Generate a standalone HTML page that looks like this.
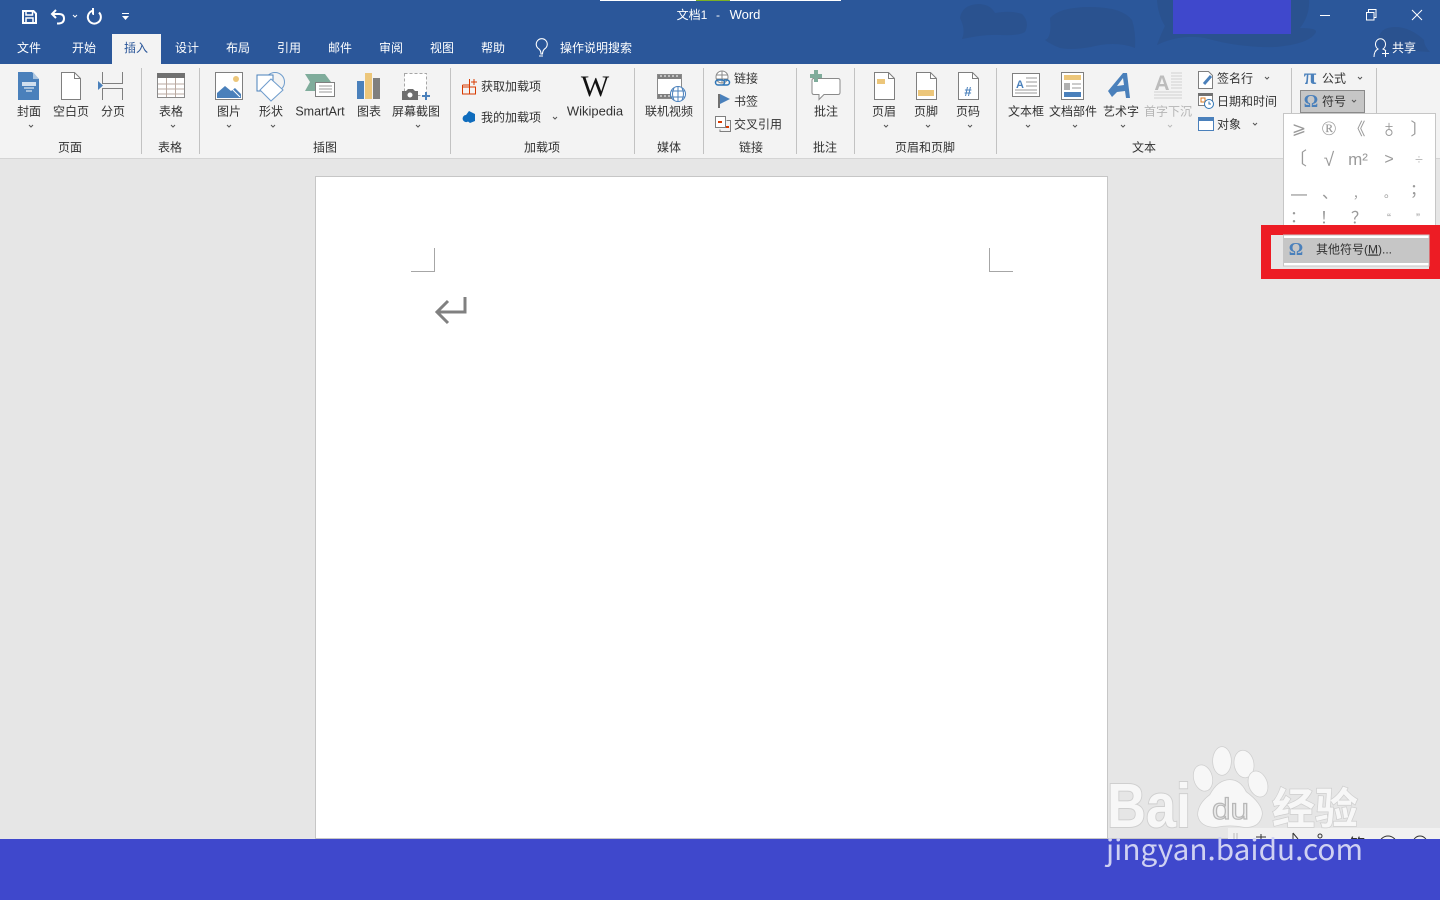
<!DOCTYPE html>
<html lang="zh-CN"><head><meta charset="utf-8"><title>文档1 - Word</title>
<style>
html,body{margin:0;padding:0;width:1440px;height:900px;overflow:hidden;background:#e6e6e6}
svg{display:block;position:absolute;left:0;top:0}
text{font-family:"Liberation Sans","Noto Sans CJK SC",sans-serif;font-size:12px;fill:#333;text-anchor:middle}
.w text,text.w{fill:#fff}
.l{text-anchor:start}
.g{fill:#b5b5b5}
.sym text{fill:#9a9a9a;font-size:16px}
.ch{fill:none;stroke:#555;stroke-width:1}
</style></head><body>
<svg width="1440" height="900" viewBox="0 0 1440 900">
<!-- backgrounds -->
<rect x="0" y="0" width="1440" height="64" fill="#2b579a"/>
<g fill="#2a528f">
<path d="M960 18Q962 5 978 4 990 4 995 13 1010 10 1022 14 1030 22 1025 32 1018 36 1000 35 985 34 962 39 966 30 960 18Z"/>
<path d="M1050 18Q1060 7 1090 7 1122 7 1132 20 1136 32 1135 48 1120 42 1100 45 1075 51 1060 48 1050 44 1045 40 1052 38 1050 18Z"/>
<path d="M1157 0H1309Q1310 15 1300 28 1317 28 1316 32 1310 44 1275 47 1240 48 1205 38 1180 34 1157 45 1161 34 1165 26 1158 15 1157 0Z"/>
<path d="M1378 40Q1380 27 1395 27 1410 27 1424 40 1424 46 1430 52 1405 50 1385 52Q1378 48 1378 40Z"/>
</g>
<rect x="600" y="0" width="241" height="1" fill="#fff"/><rect x="696" y="0" width="34" height="1" fill="#7cb024"/>
<rect x="1173" y="0" width="118" height="34" fill="#3f48cc"/>
<rect x="112" y="34" width="49" height="30" fill="#f3f3f3"/>
<rect x="0" y="64" width="1440" height="94" fill="#f3f3f3"/>
<rect x="0" y="158" width="1440" height="1" fill="#d4d4d4"/>
<rect x="315.500" y="176.500" width="792" height="663" fill="#fff" stroke="#c6c6c6"/>
<rect x="1228" y="828" width="212" height="11" fill="#f1f1f1"/>

<!-- QAT -->
<g fill="none" stroke="#fff" stroke-width="2">
<path d="M23 11h10.500l2.500 2.500V23H23z"/><path d="M26 11v4h6.500v-4M26 23v-5h7v5" stroke-width="1.500"/>
<path d="M56 10l-4 4 4 4M52 14h7q5 0 5 4.500t-5 5h-2"/>
<path d="M93 10.700a6.500 6.500 0 1 0 6 1.800M93 8v6h-0.500" />
</g>
<path d="M73 15l2 2 2-2" fill="none" stroke="#fff"/>
<path d="M122 16h7l-3.500 4z" fill="#fff"/>
<rect x="122" y="13" width="7" height="1" fill="#fff"/>

<!-- title -->
<g class="w">
<text x="692" y="19">文档1</text><text x="718" y="19">-</text><text x="745" y="19" style="font-size:13px">Word</text>
</g>
<!-- window controls -->
<g fill="none" stroke="#fff" stroke-width="1">
<path d="M1320 15.500h10"/><path d="M1366.500 12.500h7.500v7.500h-7.500zM1368.500 12v-2.500h7.500v8h-2"/><path d="M1412 10l10 10M1422 10l-10 10"/>
<path d="M1374 57q0-6 4-8a5 5.500 0 1 1 5 0q2 .8 3 2"/><path d="M1382 53.500h7M1385.500 50v7"/>
<path d="M541 54q0-3-2-5a5.500 5.500 0 1 1 5.500 0q-2 2-2 5zM539 56h4" stroke-width="1.100"/>
</g>
<!-- tabs -->
<g class="w">
<text x="29" y="52">文件</text><text x="84" y="52">开始</text>
<text x="187" y="52">设计</text><text x="238" y="52">布局</text><text x="289" y="52">引用</text><text x="340" y="52">邮件</text><text x="391" y="52">审阅</text><text x="442" y="52">视图</text><text x="493" y="52">帮助</text><text x="596" y="52">操作说明搜索</text><text x="1404" y="52">共享</text>
</g>
<text x="136" y="52" style="fill:#2b579a">插入</text>

<!-- separators -->
<g fill="#c2c2c2">
<rect x="141" y="68" width="1" height="86"/><rect x="199" y="68" width="1" height="86"/><rect x="450" y="68" width="1" height="86"/><rect x="634" y="68" width="1" height="86"/><rect x="703" y="68" width="1" height="86"/><rect x="796" y="68" width="1" height="86"/><rect x="854" y="68" width="1" height="86"/><rect x="996" y="68" width="1" height="86"/><rect x="1291" y="68" width="1" height="45"/><rect x="1376" y="68" width="1" height="45"/>
</g>

<!-- page group icons -->
<path d="M18 72h14l7 7v21h-21z" fill="#4a80bb"/><path d="M33 72l6 7h-6z" fill="#a9c4e0"/><rect x="22" y="82" width="14" height="4" fill="#fff" opacity=".75"/><path d="M24 88h10M26 91h6" stroke="#fff"/>
<path d="M61.500 72.500h13l6 6v21h-19z" fill="#fff" stroke="#7f7f7f"/><path d="M74.500 72.500v6h6" fill="none" stroke="#7f7f7f"/>
<path d="M102.500 72v11.500h20V72M102.500 100v-11.500h20V100" fill="none" stroke="#7f7f7f"/><path d="M98 81l5 4.500-5 4.500z" fill="#4a80bb"/>
<!-- table -->
<rect x="157.500" y="73.500" width="27" height="24" fill="#fff" stroke="#8a8a8a"/><rect x="157" y="73" width="28" height="5" fill="#707070"/>
<path d="M158 84h26M158 89h26M158 94h26M166.500 78v19M175.500 78v19" stroke="#b9a9a0" fill="none"/>
<!-- picture -->
<rect x="215.500" y="72.500" width="27" height="27" fill="#fff" stroke="#7f7f7f"/><circle cx="236" cy="79" r="3" fill="#ecc67a"/>
<path d="M217 98v-5l8-7 6 5 4-3 6 6v4z" fill="#4a80bb"/><path d="M229 86l11 11" stroke="#fff"/>
<!-- shapes -->
<circle cx="275" cy="82" r="9.500" fill="none" stroke="#6e9ccc"/>
<rect x="257" y="75" width="16" height="16" fill="#fff" stroke="#4a80bb"/>
<path d="M271 79l12 11-12 11-11-11z" fill="#fff" stroke="#6e9ccc"/>
<!-- smartart -->
<path d="M305 74h20l6 8h-14v9h-12l5-9z" fill="#7fac9b"/><rect x="315.500" y="82.500" width="19" height="14" fill="#fff" stroke="#7f7f7f"/><path d="M319 86h13M319 89h13M319 92h13" stroke="#9a9a9a"/>
<!-- chart -->
<rect x="357" y="81" width="7" height="18" fill="#4a80bb"/><rect x="365" y="73" width="7" height="26" fill="#ecc67a"/><rect x="373" y="78" width="7" height="21" fill="#7f7f7f"/>
<!-- screenshot -->
<rect x="404.500" y="73.500" width="22" height="22" fill="#fff" stroke="#a6a6a6" stroke-dasharray="3 2"/>
<path d="M402 91h4l2-2h5l2 2h3v9h-16z" fill="#6e6e6e"/><circle cx="410" cy="95" r="3" fill="#fff" stroke="#6e6e6e"/>
<path d="M426 92v8M422 96h8" stroke="#4a80bb" stroke-width="2"/>
<!-- addins -->
<path d="M462.500 85h7V79M462.500 85v9h13v-7h-13M469.500 85v9" fill="none" stroke="#d83b01"/><path d="M474 79v6M471 82h6" stroke="#d83b01"/>
<path d="M469 111l6 3v7l-5 2-2-1.500a3.500 3.500 0 0 1-5-4.500 3.500 3.500 0 0 1 3-2z" fill="#0f6cbd"/>
<text x="595" y="96" style="font-family:'Liberation Serif',serif;font-size:30px;fill:#111">W</text>
<!-- video -->
<rect x="657.500" y="74.500" width="24" height="24" fill="#fff" stroke="#8a8a8a"/><path d="M658 75h23v4h-23zM658 94h23v4h-23z" fill="#7f7f7f"/><path d="M660 76h2M664 76h2M668 76h2M672 76h2M676 76h2M660 96h2M664 96h2M668 96h2" stroke="#fff"/>
<circle cx="678" cy="94" r="7.500" fill="#fff" stroke="#4a80bb"/><path d="M671 91h14M671 97h14M678 87v14M674 88q-3 6 0 12M682 88q3 6 0 12" fill="none" stroke="#4a80bb"/>
<!-- links -->
<circle cx="722" cy="77" r="6" fill="#fff" stroke="#8a8a8a"/><path d="M716 75h12M716 79h12M722 71v12" stroke="#8a8a8a"/>
<path d="M717 80h5a2.500 2.500 0 0 1 0 5h-4a2.500 2.500 0 0 1 0-5zM724 80h3a2.500 2.500 0 0 1 0 5h-4" fill="none" stroke="#2e75b6" stroke-width="1.500"/>
<rect x="718" y="94" width="2" height="14" fill="#707070"/><path d="M720 94l10 5-10 5z" fill="#4a80bb"/>
<path d="M715.500 116.500h10v11h-10z" fill="#fff" stroke="#7f7f7f"/><path d="M720 129.500v2h10.500v-11h-4" fill="none" stroke="#7f7f7f"/><path d="M718 122h4M726 127h3" stroke="#d83b01" stroke-width="2"/>
<!-- comment -->
<path d="M814 78.500h24q2 0 2 2v12q0 2-2 2h-14l-5 5v-5h-5q-2 0-2-2v-12q0-2 2-2z" fill="#fff" stroke="#8a8a8a"/>
<path d="M816 70v12M810 76h12" stroke="#7fac9b" stroke-width="4"/>
<!-- headers -->
<g fill="#fff" stroke="#7f7f7f"><path d="M874.500 72.500h14l6 6v21h-20z"/><path d="M916.500 72.500h14l6 6v21h-20z"/><path d="M958.500 72.500h14l6 6v21h-20z"/></g>
<g fill="none" stroke="#7f7f7f"><path d="M888.500 72.500v6h6M930.500 72.500v6h6M972.500 72.500v6h6"/></g>
<rect x="877" y="79" width="8" height="5" fill="#ecc67a"/><rect x="918" y="90" width="16" height="6" fill="#ecc67a"/>
<text x="968" y="96" style="font-size:13px;font-weight:bold;fill:#4a80bb">#</text>
<!-- text group -->
<rect x="1012.500" y="73.500" width="27" height="23" fill="#fff" stroke="#7f7f7f"/><text x="1020" y="88" style="font-size:11px;font-weight:bold;fill:#4a80bb">A</text><path d="M1026 78h11M1026 82h11M1026 86h11M1015 90h22M1015 93h22" stroke="#9a9a9a"/>
<rect x="1061.500" y="72.500" width="22" height="27" fill="#fff" stroke="#7f7f7f"/><rect x="1064" y="75" width="17" height="5" fill="#ecc67a"/><rect x="1064" y="83" width="6" height="7" fill="#b0b0b0"/><path d="M1072 84h9M1072 88h9" stroke="#9a9a9a"/><rect x="1064" y="92" width="17" height="5" fill="#4a80bb"/>
<path d="M1108 91l15-18h4l3 25h-4l-1-7-8 1-5 5z M1117 86l7-1-1-7z" fill="#4a80bb" fill-rule="evenodd"/>
<text x="1162" y="90" style="font-size:21px;font-weight:bold;fill:#bcbcbc">A</text><path d="M1171 73h11M1171 76h11M1171 79h11M1171 82h11M1171 85h11M1171 88h11M1154 92h28M1154 95h28M1154 98h28" stroke="#d0d0d0"/>
<!-- small right -->
<path d="M1198.500 71.500h10l4 4v13h-14z" fill="#fff" stroke="#7f7f7f"/><path d="M1204 84l7-8" stroke="#4a80bb" stroke-width="3"/>
<rect x="1198.500" y="93.500" width="14" height="12" fill="#fff" stroke="#7f7f7f"/><rect x="1198" y="93" width="15" height="3" fill="#707070"/><rect x="1201" y="98" width="4" height="4" fill="#fff" stroke="#d87a20"/><circle cx="1209" cy="104" r="4.500" fill="#fff" stroke="#2e75b6"/><path d="M1209 101.500v2.500h2" stroke="#2e75b6" fill="none"/>
<rect x="1198.500" y="117.500" width="15" height="13" fill="#fff" stroke="#4a80bb"/><rect x="1198" y="117" width="16" height="4" fill="#4a80bb"/>
<!-- symbol highlight -->
<rect x="1300.500" y="90.500" width="64" height="22" fill="#c6c6c6" stroke="#8a8a8a"/>
<text x="1310" y="84" style="font-family:'Liberation Serif',serif;font-size:23px;font-weight:bold;fill:#4a80bb">π</text>
<text x="1311" y="107" style="font-family:'Liberation Serif',serif;font-size:18px;font-weight:bold;fill:#4a80bb">Ω</text>

<!-- labels -->
<text x="29" y="115.500">封面</text><text x="71" y="115.500">空白页</text><text x="113" y="115.500">分页</text><text x="171" y="115.500">表格</text><text x="229" y="115.500">图片</text><text x="271" y="115.500">形状</text><text x="320" y="115.500" style="font-size:12.500px">SmartArt</text><text x="369" y="115.500">图表</text><text x="416" y="115.500">屏幕截图</text><text x="595" y="115.500" style="font-size:13px">Wikipedia</text><text x="669" y="115.500">联机视频</text><text x="826" y="115.500">批注</text><text x="884" y="115.500">页眉</text><text x="926" y="115.500">页脚</text><text x="968" y="115.500">页码</text><text x="1026" y="115.500">文本框</text><text x="1073" y="115.500">文档部件</text><text x="1121" y="115.500">艺术字</text><text x="1168" y="115.500" class="g" style="fill:#b5b5b5">首字下沉</text>
<text x="70" y="151.500">页面</text><text x="170" y="151.500">表格</text><text x="325" y="151.500">插图</text><text x="542" y="151.500">加载项</text><text x="669" y="151.500">媒体</text><text x="751" y="151.500">链接</text><text x="825" y="151.500">批注</text><text x="925" y="151.500">页眉和页脚</text><text x="1144" y="151.500">文本</text>
<text class="l" x="481" y="90.500">获取加载项</text><text class="l" x="481" y="121.500">我的加载项</text><text class="l" x="734" y="82.500">链接</text><text class="l" x="734" y="105.500">书签</text><text class="l" x="734" y="128.500">交叉引用</text><text class="l" x="1217" y="82.500">签名行</text><text class="l" x="1217" y="105.500">日期和时间</text><text class="l" x="1217" y="128.500">对象</text><text class="l" x="1322" y="82.500">公式</text><text class="l" x="1322" y="105.500">符号</text>
<!-- chevrons -->
<path class="ch" d="M29 125l2 2 2-2M171 125l2 2 2-2M227 125l2 2 2-2M271 125l2 2 2-2M416 125l2 2 2-2M553 117l2 2 2-2M884 125l2 2 2-2M926 125l2 2 2-2M968 125l2 2 2-2M1026 125l2 2 2-2M1073 125l2 2 2-2M1121 125l2 2 2-2M1265 77l2 2 2-2M1253 123l2 2 2-2M1358 77l2 2 2-2M1352 100l2 2 2-2"/>
<path d="M1168 125l2 2 2-2" fill="none" stroke="#bbb"/>

<!-- page margin marks and return -->
<path d="M434.500 248v23.500H411M989.500 248v23.500H1013" fill="none" stroke="#a6a6a6"/>
<path d="M465 297v15H438M448 301l-11 11 11 11" fill="none" stroke="#808080" stroke-width="3"/>

<!-- dropdown -->
<rect x="1283.500" y="113.500" width="152" height="112" fill="#fff" stroke="#c6c6c6"/>
<g class="sym">
<text x="1299" y="134" style="font-size:17px">⩾</text><text x="1329" y="135" style="font-size:20px;font-family:'Liberation Serif',serif">®</text><text x="1357" y="135" style="font-size:17px">《</text><text x="1389" y="137" style="font-size:25px">♁</text><text x="1419" y="135" style="font-size:17px">〕</text>
<text x="1298" y="165" style="font-size:18px">〔</text><text x="1329" y="166" style="font-size:19px">√</text><text x="1358" y="165" style="font-size:17px">m²</text><text x="1389" y="164" style="font-size:16px">&gt;</text><text x="1419" y="164" style="fill:#bbb;font-size:14px">÷</text>
<text x="1299" y="199" style="fill:#8a8a8a;font-size:16px">—</text><text x="1330" y="198">、</text><text x="1359" y="198" style="font-size:12px">，</text><text x="1390" y="197" style="font-size:12px">。</text><text x="1418" y="195">；</text>
<text x="1298" y="222">：</text><text x="1328" y="223">！</text><text x="1359" y="223">？</text><text x="1389" y="222" style="font-size:12px">“</text><text x="1418" y="222" style="font-size:12px">”</text>
</g>
<!-- red box -->
<rect x="1261" y="225" width="179" height="54" fill="#ed1c24"/>
<rect x="1271" y="235" width="158" height="34" fill="#e6e6e6"/>
<rect x="1283.500" y="235" width="145.500" height="31" fill="#fff" stroke="#c6c6c6"/>
<rect x="1284" y="238" width="145" height="25" fill="#c6c6c6"/>
<text x="1296" y="255" style="font-family:'Liberation Serif',serif;font-size:18px;font-weight:bold;fill:#4a80bb">Ω</text>
<text class="l" x="1316" y="253.500">其他符号(<tspan text-decoration="underline">M</tspan>)...</text>

<!-- status remnants -->
<g fill="none" stroke="#333"><path d="M1234 833v6M1237 833v6" stroke="#bbb"/><path d="M1261 834v5M1256 837h10M1293 833l5 6M1293 833v6"/><circle cx="1320" cy="836" r="2"/><circle cx="1388" cy="845" r="9"/><circle cx="1420" cy="843" r="7"/></g>
<text x="1357" y="851" style="font-size:17px">简</text>
<rect x="0" y="839" width="1440" height="61" fill="#3f48cc"/>
<rect x="316" y="838" width="912" height="1" fill="#c6c6c6"/>

<!-- watermark -->
<g style="paint-order:stroke" stroke="#cfcfcf" stroke-width="1.500" fill="#f7f7f7">
<ellipse cx="1222" cy="761" rx="9" ry="14"/><ellipse cx="1244" cy="764" rx="9.500" ry="13.500" transform="rotate(-10 1244 764)"/><ellipse cx="1203" cy="778" rx="9" ry="13" transform="rotate(-15 1203 778)"/><ellipse cx="1258" cy="784" rx="9" ry="13" transform="rotate(-20 1258 784)"/>
<path d="M1230 780q10 0 16 12 16 12 16 22-2 14-18 13-14-3-28 0-16 0-18-12 0-11 12-20 8-15 20-15z"/>
</g>
<text x="1107" y="827" class="l" style="font-size:62px;font-weight:bold;fill:#f7f7f7;stroke:#cfcfcf;stroke-width:2px;paint-order:stroke" textLength="84" lengthAdjust="spacingAndGlyphs">Bai</text>
<text x="1212" y="819" class="l" style="font-size:30px;fill:#ececec;stroke:#b8b8b8;stroke-width:1.200px" textLength="37" lengthAdjust="spacingAndGlyphs">du</text>
<text x="1272" y="824" class="l" style="font-size:43px;font-weight:bold;fill:#f7f7f7;stroke:#cfcfcf;stroke-width:1.500px;paint-order:stroke">经验</text>
<text x="1106" y="860" class="l" style="font-family:'Noto Sans CJK SC','Liberation Sans',sans-serif;font-size:29px;fill:#cfd1f2" textLength="257" lengthAdjust="spacingAndGlyphs">jingyan.baidu.com</text>
</svg>
</body></html>
